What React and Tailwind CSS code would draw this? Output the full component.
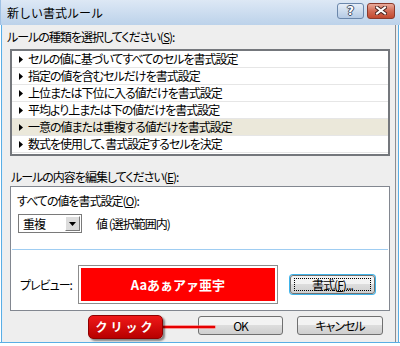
const jp = "font-['Noto_Sans_CJK_JP','Noto_Sans',sans-serif] [font-feature-settings:'palt']";

const rules = [
  'セルの値に基づいてすべてのセルを書式設定',
  '指定の値を含むセルだけを書式設定',
  '上位または下位に入る値だけを書式設定',
  '平均より上または下の値だけを書式設定',
  '一意の値または重複する値だけを書式設定',
  '数式を使用して、書式設定するセルを決定',
];

function WinButton({ children, className = '', focused = false }) {
  return (
    <div
      className={`h-[19px] rounded-[3px] border border-[#707070] bg-linear-to-b from-[#f3f3f3] from-45% via-[#dddddd] via-50% to-[#cfcfcf] flex items-center justify-center text-[12px] leading-none text-black ${
        focused ? 'ring-1 ring-[#3fb4ea] border-[#3c7fb1]' : ''
      } ${className}`}
    >
      {focused ? (
        <span className="flex items-center justify-center w-[calc(100%-6px)] h-[13px] border border-dotted border-black">
          {children}
        </span>
      ) : (
        children
      )}
    </div>
  );
}

function Arrow() {
  return (
    <svg width="4" height="7" viewBox="0 0 4 7" className="shrink-0">
      <path d="M0 0 L4 3.5 L0 7 Z" fill="#000" />
    </svg>
  );
}

export default function App() {
  return (
    <div className={`relative w-[400px] h-[346px] bg-white flex flex-col overflow-hidden ${jp}`}>
      {/* title bar */}
      <div className="h-[25px] shrink-0 flex items-center bg-linear-to-b from-[#dde8f5] to-[#bcd2ea] border-l border-[#9fc1e4]">
        <span className="ml-[6px] text-[12px] text-black [font-feature-settings:normal]">新しい書式ルール</span>
        <div className="ml-auto flex items-start gap-[3px] mr-[5px] -mt-[4px]">
          <div className="w-[27px] h-[16px] rounded-[3px] border border-[#6b87ab] bg-linear-to-b from-[#e6eef8] to-[#b4cae4] flex items-center justify-center">
            <span className="text-[12px] font-bold leading-none text-white font-['DejaVu_Sans',sans-serif] [text-shadow:1px_0_0_#3d4e66,-1px_0_0_#3d4e66,0_1px_0_#3d4e66,0_-1px_0_#3d4e66]">
              ?
            </span>
          </div>
          <div className="w-[28px] h-[16px] rounded-[3px] border border-[#8a3a2c] bg-linear-to-b from-[#e9ab9c] via-[#d26b55] to-[#c2492f] flex items-center justify-center">
            <svg width="12" height="9" viewBox="0 0 12 9">
              <path d="M2 1.5 L10 7.5 M10 1.5 L2 7.5" stroke="#4a2420" strokeWidth="4" strokeLinecap="square" />
              <path d="M2 1.5 L10 7.5 M10 1.5 L2 7.5" stroke="#fff" strokeWidth="2" strokeLinecap="square" />
            </svg>
          </div>
        </div>
      </div>

      {/* body */}
      <div className="flex-1 flex border-l border-white">
        <div className="w-[1px] bg-[#5aaee4]" />
        <div className="w-[1px] bg-[#e4eef8]" />
        <div className="flex-1 bg-[#eeeeee] flex flex-col text-[12px] leading-[14px] tracking-[-1px] text-black">
          <div className="mt-[5px] ml-[4px]">
            ルールの種類を選択してください(<span className="underline">S</span>):
          </div>

          <div className="mt-[5px] ml-[7px] mr-[5px] h-[107px] border-2 border-[#74777c] bg-white flex flex-col">
            {rules.map((r, i) => (
              <div
                key={i}
                className={`h-[17px] shrink-0 flex items-center gap-[5px] pl-[7px] border-b border-[#e6e6e6] ${
                  i === 4 ? 'bg-[#ebe8da]' : ''
                }`}
              >
                <Arrow />
                <span className="whitespace-nowrap">{r}</span>
              </div>
            ))}
          </div>

          <div className="mt-[14px] ml-[8px]">
            ルールの内容を編集してください(<span className="underline">E</span>):
          </div>

          <div className="mt-[2px] ml-[7px] mr-[5px] h-[125px] border border-[#828790] bg-white flex flex-col">
            <div className="mt-[7px] ml-[6px]">
              すべての値を書式設定(<span className="underline">O</span>):
            </div>
            <div className="mt-[6px] ml-[7px] flex items-center">
              <div className="w-[64px] h-[19px] border border-[#7a7a7a] bg-white flex items-center">
                <span className="ml-[4px]">重複</span>
                <div className="ml-auto mr-[1px] w-[15px] h-[15px] border border-t-white border-l-white border-r-[#7a7a7a] border-b-[#7a7a7a] bg-[#dcdcdc] flex items-center justify-center">
                  <svg width="7" height="4" viewBox="0 0 7 4">
                    <path d="M0 0 H7 L3.5 4 Z" fill="#000" />
                  </svg>
                </div>
              </div>
              <span className="ml-[14px]">値 (選択範囲内)</span>
            </div>
            <div className="mt-[16px] mx-[1px] h-[1px] bg-[#9fcdf2]" />
            <div className="mt-[15px] h-[39px] flex items-center">
              <span className="ml-[9px] w-[58px]">プレビュー:</span>
              <div className="w-[200px] h-[39px] border border-[#8c8c8c] p-[2px] bg-white">
                <div className="w-full h-full bg-[#ff0000] flex items-center justify-center text-white font-bold text-[13px] tracking-normal [font-feature-settings:normal]">
                  Aaあぁアァ亜宇
                </div>
              </div>
              <WinButton focused className="ml-[12px] w-[85px]">
                書式(<span className="underline">F</span>)...
              </WinButton>
            </div>
          </div>

          <div className="mt-[5px] flex justify-end gap-[14px] mr-[12px]">
            <WinButton className="w-[85px]">OK</WinButton>
            <WinButton className="w-[86px]">キャンセル</WinButton>
          </div>
        </div>
        <div className="w-[1px] bg-[#8a8d92]" />
        <div className="w-[2px] bg-[#eeeeee]" />
        <div className="w-[1px] bg-[#5aaee4]" />
        <div className="w-[1px] bg-white" />
      </div>
      <div className="h-[1px] bg-[#5aaee4] shrink-0" />
      <div className="h-[3px] bg-white shrink-0" />

      {/* callout annotation */}
      <div className="absolute left-[160px] top-[325px] w-[56px] h-[4px] rounded-full bg-[#ff6060]/60" />
      <div className="absolute left-[160px] top-[326px] w-[55px] h-[2px] bg-[#e60000]" />
      <div className="absolute left-[88px] top-[315px] w-[75px] h-[24px] rounded-[5px] border border-[#8e0000] bg-linear-to-b from-[#f01818] to-[#b80000] shadow-[2px_2px_2px_rgba(0,0,0,0.45)] flex items-center justify-center">
        <span className="text-white font-bold text-[12px] tracking-[3px] [font-feature-settings:normal]">クリック</span>
      </div>
    </div>
  );
}
